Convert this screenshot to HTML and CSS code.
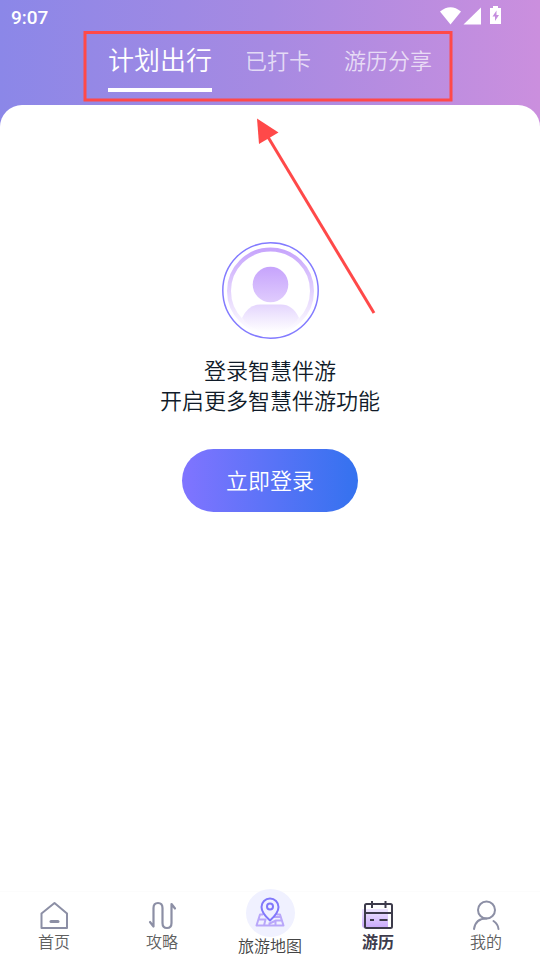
FILE: index.html
```html
<!DOCTYPE html>
<html lang="zh-CN">
<head>
<meta charset="utf-8">
<meta name="viewport" content="width=device-width, initial-scale=1">
<title>游历</title>
<link rel="stylesheet" href="styles.css">
</head>
<body>
<div class="status">
  <span class="time">9:07</span>
  <svg class="status-icons" width="62" height="20" viewBox="0 0 62 20" fill="#fff" aria-hidden="true">
    <path d="M0 5.500Q10.500 -3 21 5.500L10.500 18.500Z"/>
    <path d="M41 1.500V18.500H23.500Z"/>
    <path fill-rule="evenodd" d="M53 0h5v2h3v16H50V2h3zM56.500 4.500L52.500 10.500H55V15L59 9H56.500Z"/>
  </svg>
</div>
<nav class="tabs" aria-label="游历分类">
  <a class="tab active" href="#plan" aria-current="page">计划出行</a>
  <a class="tab" href="#visited">已打卡</a>
  <a class="tab" href="#share">游历分享</a>
</nav>
<main class="panel">
  <svg class="avatar" width="98" height="98" viewBox="-1 0 98 98" fill="none" aria-hidden="true">
    <defs>
      <linearGradient id="ring" x1="0" y1="0" x2="0" y2="1"><stop stop-color="#c7a5fc"/><stop offset="1" stop-color="#fff"/></linearGradient>
      <linearGradient id="head" x1="0" y1="0" x2="0" y2="1"><stop stop-color="#c6a3fc"/><stop offset="1" stop-color="#e0ccfd"/></linearGradient>
      <linearGradient id="bust" x1="0" y1="0" x2="0" y2="1"><stop stop-color="#e4d5fd"/><stop offset="1" stop-color="#fff"/></linearGradient>
    </defs>
    <circle cx="48.500" cy="48.500" r="47.700" stroke="#837bff" stroke-width="1.500"/>
    <circle cx="48.500" cy="49" r="41.500" stroke="url(#ring)" stroke-width="4"/>
    <circle cx="48.500" cy="42.500" r="17.800" fill="url(#head)"/>
    <path d="M20 76Q26 62.500 38 62.500H59Q71 62.500 77 76Q67 90 48.500 90T20 76Z" fill="url(#bust)"/>
  </svg>
  <p class="prompt">登录智慧伴游<br>开启更多智慧伴游功能</p>
  <button class="login" type="button">立即登录</button>
</main>
<nav class="bottom" aria-label="主导航">
  <a class="item" href="#home">
    <svg width="32" height="32" viewBox="0 0 32 32" fill="none" stroke="#8c8fa5" stroke-width="2" stroke-linejoin="round" aria-hidden="true"><path d="M3.500 13.500L16.500 3L29 13.500V28H3.500Z"/><path d="M13 21.500h7" stroke-width="3" stroke-linecap="round"/></svg>
    <span>首页</span>
  </a>
  <a class="item" href="#guides">
    <svg width="32" height="32" viewBox="0 0 32 32" fill="none" stroke="#8c8fa5" stroke-width="2.200" stroke-linejoin="round" stroke-linecap="round" aria-hidden="true"><path d="M4 22L7.500 26.500V8Q7.500 3 12 3T16.500 8V23Q16.500 28 21 28T25.500 23V4L29 8.500"/></svg>
    <span>攻略</span>
  </a>
  <a class="item map" href="#map">
    <span class="bubble"><svg width="32" height="32" viewBox="0 0 32 32" fill="none" stroke-width="2" stroke-linejoin="round" aria-hidden="true">
      <g stroke="#b9a7fa"><path d="M9 17.500H6L2.500 28.500H29.500L26 17.500H22.500M5 22.500H11.500L10 28.500M15.500 28.500V25.500M15.500 26.500L22 23.500H28M20 20H26M21.500 24V28.500"/></g>
      <path d="M16 23.500Q7.500 16 7.500 10A8.500 8.500 0 0 1 24.500 10Q24.500 16 16 23.500Z" fill="#f0f1ff" stroke="#8178fb"/><circle cx="16" cy="9.500" r="3" stroke="#8178fb"/>
    </svg></span>
    <span>旅游地图</span>
  </a>
  <a class="item current" href="#travels" aria-current="page">
    <svg width="32" height="32" viewBox="0 0 32 32" fill="none" stroke="#3d3b4b" stroke-width="2" stroke-linejoin="round" aria-hidden="true">
      <defs><linearGradient id="cal" x1="0" y1="0" x2="0" y2="1"><stop stop-color="#eee5ff"/><stop offset="1" stop-color="#c8a8fb"/></linearGradient></defs>
      <path d="M0 9H26V28H3Q0 28 0 25Z" fill="url(#cal)" stroke="none"/><rect x="3" y="4" width="27" height="24" rx="1.500"/><path d="M3 13H30M10 1V8M23.500 1V8M8 20H12M17.500 20H25.500"/>
    </svg>
    <span>游历</span>
  </a>
  <a class="item" href="#mine">
    <svg width="32" height="32" viewBox="0 0 32 32" fill="none" stroke="#8c8fa5" stroke-width="2" stroke-linecap="round" aria-hidden="true"><circle cx="16.500" cy="10" r="8.500"/><path d="M4 29Q5.500 18.500 16.500 18.500M23.500 21Q28 24 28.500 29"/></svg>
    <span>我的</span>
  </a>
</nav>
<svg class="callout" width="370" height="286" viewBox="0 0 370 286" fill="none" stroke="#ff4949" stroke-width="3" aria-hidden="true">
  <rect x="2" y="2.500" width="366" height="67.500"/>
  <path d="M185 107L291 283"/><path d="M174 88.500L195.500 102.500L176 114Z" fill="#ff4949" stroke="none"/>
</svg>
</body>
</html>
```
FILE: styles.css
```css
* {
  box-sizing: border-box;
}

body {
  position: relative;
  display: flex;
  flex-direction: column;
  min-height: 100vh;
  margin: 0;
  font-family: Roboto, "Noto Sans CJK SC", sans-serif;
  font-weight: 350;
  background: linear-gradient(90deg, #8b87e8, #a78ae2 50%, #cb8fde);
}

a {
  color: inherit;
  text-decoration: none;
}

.status {
  display: flex;
  align-items: center;
  justify-content: space-between;
  height: 34px;
  padding: 0 38px 0 11px;
  color: #fff;
}

.time {
  font-size: 19px;
  font-weight: 500;
}

.status-icons {
  margin-bottom: 2px;
}

.tabs {
  display: flex;
  justify-content: center;
  gap: 33px;
  height: 71px;
  padding-bottom: 13px;
}

.tab {
  color: rgba(255, 255, 255, 0.7);
  font-family: "Noto Sans CJK SC", sans-serif;
  font-size: 22px;
  line-height: 50px;
}

.tab.active {
  border-bottom: 4px solid #fff;
  color: #fff;
  font-size: 26px;
}

.panel {
  display: flex;
  flex: 1;
  flex-direction: column;
  align-items: center;
  padding-top: 137px;
  border-radius: 22px 22px 0 0;
  background: #fff;
}

.prompt {
  margin: 14px 0 35px;
  color: #101b29;
  font-family: "Noto Sans CJK SC", sans-serif;
  font-size: 22px;
  line-height: 30px;
  text-align: center;
}

.login {
  padding: 0 44px 2px;
  border: 0;
  border-radius: 32px;
  background: linear-gradient(90deg, #8074ff, #3472ef);
  color: #fff;
  font-family: "Noto Sans CJK SC", sans-serif;
  font-size: 22px;
  font-weight: inherit;
  line-height: 61px;
}

.bottom {
  display: grid;
  grid-template-columns: repeat(5, 1fr);
  height: 69px;
  border-top: 1px solid #fcfcfc;
  background: #fff;
}

.item {
  display: flex;
  flex-direction: column;
  align-items: center;
  padding-top: 8px;
  color: #606060;
  font-size: 16px;
  line-height: 22px;
}

.item.current {
  color: #3d3b4b;
  font-weight: 700;
}

.item.map {
  margin-top: -3px;
  padding-top: 0;
  color: #444;
  line-height: 20px;
}

.bubble {
  display: grid;
  place-items: center;
  width: 49px;
  height: 48px;
  border-radius: 50%;
  background: #f0f1ff;
}

.callout {
  position: absolute;
  top: 30px;
  left: calc(50% - 187px);
}
```
